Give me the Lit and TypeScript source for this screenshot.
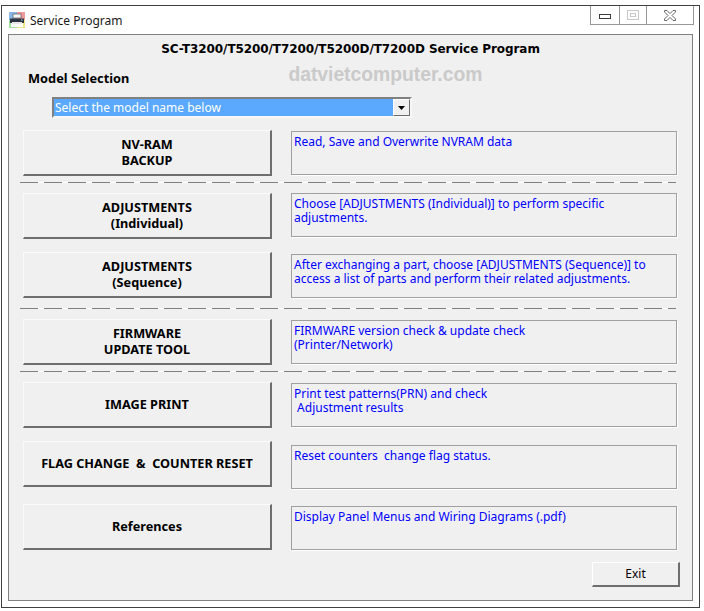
import { LitElement, html, css } from "lit";
import { customElement } from "lit/decorators.js";

type Row = { kind: "row"; top: number; label: string[]; desc: string[]; offset: number };
type Sep = { kind: "sep"; top: number };

const items: (Row | Sep)[] = [
  { kind: "row", top: 12, label: ["NV-RAM", "BACKUP"], desc: ["Read, Save and Overwrite NVRAM data"], offset: 1 },
  { kind: "sep", top: 6 },
  { kind: "row", top: 10, label: ["ADJUSTMENTS", "(Individual)"], desc: ["Choose [ADJUSTMENTS (Individual)] to perform specific", "adjustments."], offset: 0 },
  { kind: "row", top: 13, label: ["ADJUSTMENTS", "(Sequence)"], desc: ["After exchanging a part, choose [ADJUSTMENTS (Sequence)] to", "access a list of parts and perform their related adjustments."], offset: 2 },
  { kind: "sep", top: 10 },
  { kind: "row", top: 10, label: ["FIRMWARE", "UPDATE TOOL"], desc: ["FIRMWARE version check & update check", "(Printer/Network)"], offset: 1 },
  { kind: "sep", top: 6 },
  { kind: "row", top: 10, label: ["IMAGE PRINT"], desc: ["Print test patterns(PRN) and check", " Adjustment results"], offset: 1 },
  { kind: "row", top: 13, label: ["FLAG CHANGE  &  COUNTER RESET"], desc: ["Reset counters  change flag status."], offset: 4 },
  { kind: "row", top: 15, label: ["References"], desc: ["Display Panel Menus and Wiring Diagrams (.pdf)"], offset: 2 },
];

@customElement("app-root")
export class AppRoot extends LitElement {
  static styles = css`
    :host {
      display: block;
      width: 704px;
      height: 611px;
      background: #fff;
      overflow: hidden;
      font-family: "Noto Sans", sans-serif;
    }
    .window {
      box-sizing: border-box;
      width: 699px;
      height: 603px;
      margin: 5px 0 0 1px;
      border: 1px solid #404040;
      background: #fff;
      display: flex;
      flex-direction: column;
    }
    .titlebar {
      height: 28px;
      flex: none;
      display: flex;
      align-items: flex-start;
    }
    .appicon {
      width: 16px;
      height: 16px;
      margin: 6px 0 0 7px;
      flex: none;
    }
    .apptitle {
      margin: 6px 0 0 5px;
      font: 12px/18px "Noto Sans", sans-serif;
      color: #1a1a1a;
    }
    .controls {
      margin-left: auto;
      margin-right: 5px;
      height: 19px;
      box-sizing: border-box;
      display: flex;
      border: 1px solid #979797;
      border-top: none;
    }
    .ctl {
      display: flex;
      align-items: center;
      justify-content: center;
      box-sizing: border-box;
    }
    .ctl svg { display: block; }
    .ctl.min { width: 29px; padding-top: 3px; border-right: 1px solid #979797; }
    .ctl.max { width: 27px; border-right: 1px solid #979797; }
    .ctl.close { width: 46px; }
    .panel {
      box-sizing: border-box;
      width: 685px;
      height: 567px;
      margin-left: 6px;
      border: 1px solid #808080;
      background: #f0f0f0;
      display: flex;
      flex-direction: column;
      align-items: flex-start;
    }
    .heading {
      align-self: stretch;
      text-align: center;
      font-family: "DejaVu Sans", sans-serif;
      font-weight: 700;
      font-size: 12px;
      letter-spacing: -0.08px;
      line-height: 16px;
      padding-top: 6px;
      height: 26px;
      box-sizing: border-box;
      color: #000;
    }
    .modelrow {
      align-self: stretch;
      height: 36px;
      display: flex;
      align-items: flex-start;
    }
    .modellabel {
      margin: 9px 0 0 19px;
      font-weight: 700;
      font-size: 12.8px;
      line-height: 16px;
      color: #000;
    }
    .watermark {
      margin: 2px 0 0 159px;
      font: 700 19.3px/24px "Liberation Sans", sans-serif;
      color: #cacaca;
    }
    .select {
      box-sizing: border-box;
      width: 360px;
      height: 21px;
      margin-left: 43px;
      flex: none;
      border: 2px solid #808080;
      border-right-color: #f8f8f8;
      border-bottom-color: #f8f8f8;
      display: flex;
      background: #fff;
    }
    .selvalue {
      flex: 1;
      background: #5aa9ff;
      color: #fff;
      font-size: 12px;
      line-height: 17px;
      padding-left: 1px;
      white-space: pre;
    }
    .selarrow {
      width: 17px;
      flex: none;
      box-sizing: border-box;
      background: #f0f0f0;
      border: 1px solid #6e6e6e;
      border-top-color: #fff;
      border-left-color: #fff;
      display: flex;
      align-items: center;
      justify-content: center;
    }
    .row {
      display: flex;
      align-items: flex-start;
      margin-left: 14px;
      flex: none;
    }
    .btn {
      box-sizing: border-box;
      width: 249px;
      height: 46px;
      flex: none;
      padding-bottom: 2px;
      background: #f0f0f0;
      border-top: 1px solid #fafafa;
      border-left: 1px solid #fafafa;
      border-right: 2px solid #6e6e6e;
      border-bottom: 2px solid #6e6e6e;
      display: flex;
      flex-direction: column;
      align-items: center;
      justify-content: center;
      font-weight: 700;
      font-size: 12.7px;
      line-height: 16px;
      color: #000;
      white-space: pre;
    }
    .btn span {
      display: block;
      height: 16px;
      overflow: hidden;
    }
    .desc {
      box-sizing: border-box;
      width: 386px;
      height: 44px;
      margin-left: 19px;
      border: 1px solid #a0a0a0;
      box-shadow: 1px 1px 0 #fff;
      padding: 3px 2px 1px;
      font-size: 12px;
      line-height: 14px;
      color: #0000ff;
      white-space: pre;
    }
    .sep {
      width: 656px;
      height: 1px;
      margin-left: 11px;
      flex: none;
      background: repeating-linear-gradient(90deg, #808080 0 18px, #fff 18px 24px);
    }
    .exit {
      box-sizing: border-box;
      width: 88px;
      height: 25px;
      margin: 12px 0 0 583px;
      flex: none;
      background: #f0f0f0;
      border-top: 1px solid #fff;
      border-left: 1px solid #fff;
      border-right: 2px solid #6e6e6e;
      border-bottom: 2px solid #6e6e6e;
      display: flex;
      align-items: center;
      justify-content: center;
      font: 12px/16px "Noto Sans", sans-serif;
      color: #000;
    }
  `;

  private icon() {
    return html`<svg class="appicon" viewBox="0 0 16 16">
      <rect x="0" y="0" width="8" height="8" fill="#8db9e8" />
      <rect x="8" y="0" width="8" height="8" fill="#ee9a9a" />
      <rect x="0" y="8" width="8" height="8" fill="#a8dca0" />
      <rect x="8" y="8" width="8" height="8" fill="#ece68a" />
      <rect x="2" y="11" width="12" height="4" fill="#fff" />
      <rect x="4" y="2" width="8" height="4" fill="#f4f4f4" stroke="#444" stroke-width="0.6" />
      <path d="M1 6.5h14v4.5H1z" fill="#2e3440" />
      <rect x="3" y="10" width="10" height="2" fill="#e8e8e8" />
      <rect x="12" y="7.5" width="1.5" height="1" fill="#9fd0ff" />
    </svg>`;
  }

  private renderItem(it: Row | Sep) {
    if (it.kind === "sep") {
      return html`<div class="sep" style="margin-top:${it.top}px"></div>`;
    }
    return html`<div class="row" style="margin-top:${it.top}px">
      <div class="btn">${it.label.map((l) => html`<span>${l}</span>`)}</div>
      <div class="desc" style="margin-top:${it.offset}px">${it.desc.join("\n")}</div>
    </div>`;
  }

  render() {
    return html`<div class="window">
      <div class="titlebar">
        ${this.icon()}
        <div class="apptitle">Service Program</div>
        <div class="controls">
          <div class="ctl min">
            <svg width="12" height="5" viewBox="0 0 12 5"><rect x="0.5" y="0.5" width="11" height="4" fill="#fff" stroke="#3c3c3c" /></svg>
          </div>
          <div class="ctl max">
            <svg width="12" height="10" viewBox="0 0 12 10">
              <rect x="0.5" y="0.5" width="11" height="9" fill="none" stroke="#c8c8c8" />
              <rect x="3.5" y="3.5" width="5" height="3" fill="none" stroke="#c8c8c8" />
            </svg>
          </div>
          <div class="ctl close">
            <svg width="12" height="11" viewBox="0 0 12 11">
              <path d="M0.5 0.5H3L6 3.6L9 0.5H11.5V2L8 5.5L11.5 9V10.5H9L6 7.4L3 10.5H0.5V9L4 5.5L0.5 2Z" fill="#fff" stroke="#6a6a6a" />
            </svg>
          </div>
        </div>
      </div>
      <div class="panel">
        <div class="heading">SC-T3200/T5200/T7200/T5200D/T7200D Service Program</div>
        <div class="modelrow">
          <div class="modellabel">Model Selection</div>
          <div class="watermark">datvietcomputer.com</div>
        </div>
        <div class="select">
          <div class="selvalue">Select the model name below</div>
          <div class="selarrow">
            <svg width="7" height="4" viewBox="0 0 7 4"><path d="M0 0H7L3.5 4Z" fill="#000" /></svg>
          </div>
        </div>
        ${items.map((it) => this.renderItem(it))}
        <div class="exit">Exit</div>
      </div>
    </div>`;
  }
}
